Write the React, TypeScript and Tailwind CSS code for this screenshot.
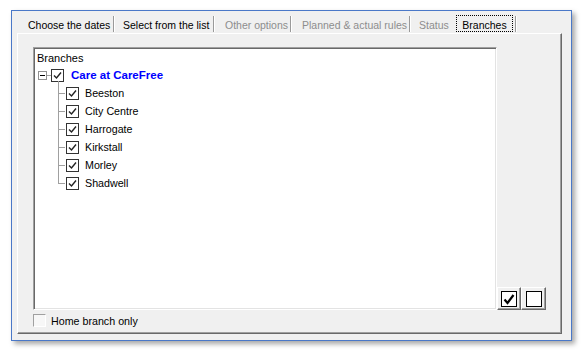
import React from 'react'

const tabs = [
  { label: 'Choose the dates', w: 'w-[93px]', pl: 'pl-[6px]', on: true, sep: true },
  { label: 'Select from the list', w: 'w-[100px]', pl: 'pl-[8px]', on: true, sep: true },
  { label: 'Other options', w: 'w-[77px]', pl: 'pl-[10px]', on: false, sep: true },
  { label: 'Planned & actual rules', w: 'w-[119px]', pl: 'pl-[10px]', on: false, sep: true },
  { label: 'Status', w: 'w-[43px]', pl: 'pl-[8px]', on: false, sep: false },
]

const branches = ['Beeston', 'City Centre', 'Harrogate', 'Kirkstall', 'Morley', 'Shadwell']

function Tick() {
  return (
    <span className="w-[13px] h-[13px] border border-[#333333] bg-white flex items-center justify-center shrink-0">
      <svg width="11" height="11" viewBox="0 0 11 11">
        <polyline points="2,5.5 4.5,8 9,2.5" fill="none" stroke="#222" strokeWidth="1.4" />
      </svg>
    </span>
  )
}

function Separator() {
  return <span className="ml-auto h-[16px] w-[2px] border-l border-[#9a9a9a] border-r border-r-white self-end mb-[1px]" />
}

export default function App() {
  return (
    <div className="w-[584px] h-[354px] bg-white pt-[10px] pl-[11px] text-[11px] text-black" style={{ fontFamily: '"Liberation Sans", Arial, sans-serif' }}>
      {/* dialog frame */}
      <div className="w-[561px] h-[331px] border border-[#4a78c8] bg-[#f0f0f0] shadow-[3px_3px_5px_rgba(0,0,0,0.35)]">
        {/* tab strip */}
        <div className="flex h-[20px] ml-[10px] mt-[2px] text-[10.5px]">
          {tabs.map((t) => (
            <div key={t.label} className={`${t.w} h-[20px] flex items-center ${t.pl}`}>
              <span className={`whitespace-nowrap leading-[14px] mt-[4px] ${t.on ? 'text-black' : 'text-[#8d8d8d]'}`}>{t.label}</span>
              {t.sep && <Separator />}
            </div>
          ))}
          <div className="w-[63px] h-[20px] flex items-center">
            <span className="ml-[2px] mt-[1px] w-[57px] h-[17px] border border-dotted border-black flex items-center justify-center leading-[14px] pt-[2px]">Branches</span>
            <Separator />
          </div>
        </div>

        {/* tab page */}
        <div className="ml-[5px] w-[545px] h-[301px] border-l border-t border-white border-r border-b border-r-[#696969] border-b-[#696969] shadow-[inset_-1px_-1px_0_#a0a0a0] pl-[15px] pt-[13px]">
          <div className="flex items-end">
            {/* tree list */}
            <div className="w-[464px] h-[263px] bg-white border border-t-[#a0a0a0] border-l-[#a0a0a0] border-r-white border-b-white shadow-[inset_1px_1px_0_#696969,inset_-1px_-1px_0_#e3e3e3] pl-[3px] pt-[3px]">
              <div className="leading-[14px]">Branches</div>
              <div className="flex items-center h-[18px] mt-[1px] pl-[1px]">
                <span className="w-[9px] h-[9px] border border-[#919191] bg-white flex items-center justify-center shrink-0">
                  <span className="w-[5px] h-[1px] bg-black" />
                </span>
                <span className="w-[4px] h-[1px] bg-[#a0a0a0]" />
                <Tick />
                <span className="ml-[7px] font-bold text-[#0000ff] text-[11.5px] leading-[14px]">Care at CareFree</span>
              </div>
              <div className="pl-[21px]">
                {branches.map((b, i) => (
                  <div key={b} className="flex items-center h-[18px]">
                    <span className="relative w-[8px] h-[18px] shrink-0">
                      <span className={`absolute left-0 -top-[3px] w-[1px] bg-[#a0a0a0] ${i === branches.length - 1 ? 'h-[12px]' : 'h-[21px]'}`} />
                      <span className="absolute left-0 top-[9px] w-[7px] h-[1px] bg-[#a0a0a0]" />
                    </span>
                    <Tick />
                    <span className="ml-[6px] leading-[14px] text-[10.7px]">{b}</span>
                  </div>
                ))}
              </div>
            </div>

            {/* check all / none */}
            <div className="flex">
              <button className="w-[24px] h-[23px] border border-t-white border-l-white border-r-[#696969] border-b-[#696969] shadow-[inset_-1px_-1px_0_#a0a0a0] flex items-center justify-center">
                <span className="w-[16px] h-[16px] border border-black bg-white flex items-center justify-center">
                  <svg width="14" height="14" viewBox="0 0 14 14">
                    <path d="M2.5 7.5 L5.5 11 L11.5 3" fill="none" stroke="#000" strokeWidth="2.2" />
                  </svg>
                </span>
              </button>
              <button className="w-[25px] h-[23px] border border-t-white border-l-white border-r-[#696969] border-b-[#696969] shadow-[inset_-1px_-1px_0_#a0a0a0] flex items-center justify-center">
                <span className="w-[16px] h-[16px] border border-black bg-white" />
              </button>
            </div>
          </div>

          {/* home branch only */}
          <div className="flex items-center mt-[4px] h-[13px]">
            <span className="w-[13px] h-[13px] border border-t-[#a0a0a0] border-l-[#a0a0a0] border-r-white border-b-white bg-[#f7f7f7] shrink-0" />
            <span className="ml-[5px] leading-[14px] text-[10.7px]">Home branch only</span>
          </div>
        </div>
      </div>
    </div>
  )
}
